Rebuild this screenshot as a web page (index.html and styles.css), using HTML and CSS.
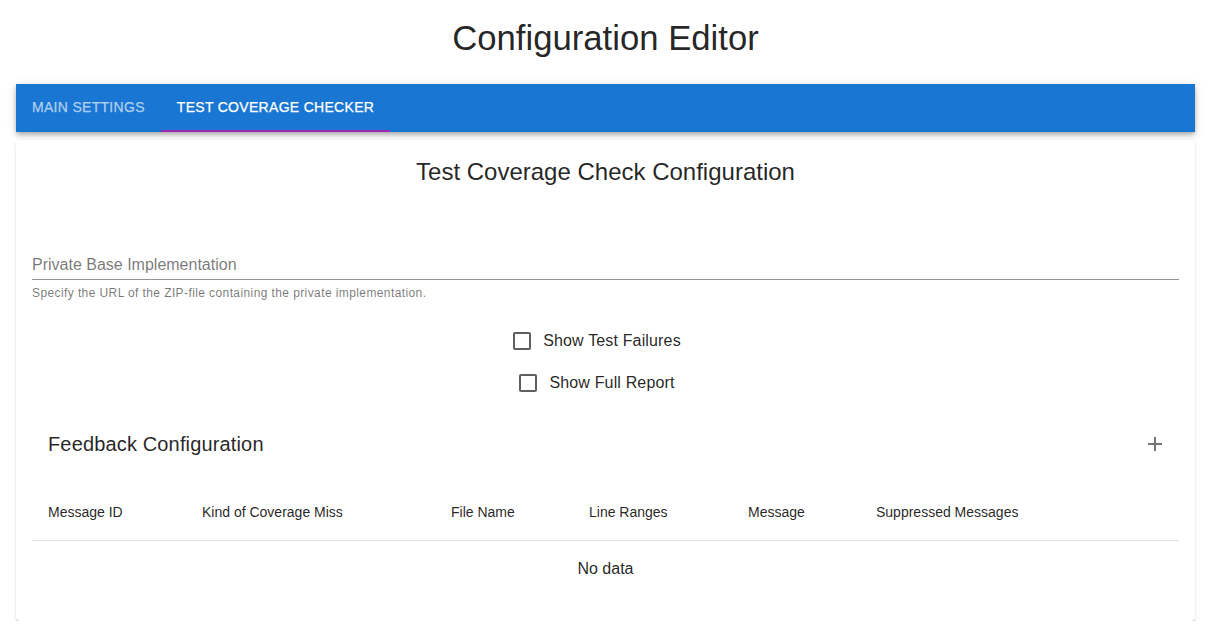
FILE: index.html
```html
<!DOCTYPE html>
<html>
<head>
<meta charset="utf-8">
<link rel="stylesheet" href="styles.css">
</head>
<body>
<h1 class="page-title">Configuration Editor</h1>
<header class="app-bar">
  <div class="tab">Main Settings</div>
  <div class="tab tab-active">Test Coverage Checker</div>
</header>
<main class="card">
  <h2 class="card-title">Test Coverage Check Configuration</h2>
  <div class="field">
    <label class="field-label">Private Base Implementation</label>
    <div class="field-input"></div>
    <p class="field-helper">Specify the URL of the ZIP-file containing the private implementation.</p>
  </div>
  <div class="checks">
    <label class="check"><span class="check-box"><svg viewBox="0 0 24 24" width="24" height="24"><path fill="#5f5f5f" d="M19 5v14H5V5h14m0-2H5c-1.1 0-2 .9-2 2v14c0 1.1.9 2 2 2h14c1.1 0 2-.9 2-2V5c0-1.1-.9-2-2-2z"/></svg></span><span class="check-text">Show Test Failures</span></label>
    <label class="check"><span class="check-box"><svg viewBox="0 0 24 24" width="24" height="24"><path fill="#5f5f5f" d="M19 5v14H5V5h14m0-2H5c-1.1 0-2 .9-2 2v14c0 1.1.9 2 2 2h14c1.1 0 2-.9 2-2V5c0-1.1-.9-2-2-2z"/></svg></span><span class="check-text">Show Full Report</span></label>
  </div>
  <div class="toolbar">
    <h3 class="toolbar-title">Feedback Configuration</h3>
    <button class="icon-btn" aria-label="add"><svg viewBox="0 0 24 24" width="24" height="24"><path fill="#757575" d="M19 13h-6v6h-2v-6H5v-2h6V5h2v6h6v2z"/></svg></button>
  </div>
  <div class="table">
    <div class="thead">
      <div class="th">Message ID</div>
      <div class="th">Kind of Coverage Miss</div>
      <div class="th">File Name</div>
      <div class="th">Line Ranges</div>
      <div class="th">Message</div>
      <div class="th">Suppressed Messages</div>
    </div>
    <div class="empty">No data</div>
  </div>
</main>
</body>
</html>
```

FILE: styles.css
```css
html, body {
  margin: 0;
  padding: 0;
  background: #fff;
}
body {
  font-family: "Liberation Sans", Arial, sans-serif;
  color: rgba(0,0,0,0.87);
  padding: 0 14px 0 16px;
}
.page-title {
  margin: 18px 0 26px;
  font-size: 34.7px;
  line-height: 40px;
  font-weight: 400;
  text-align: center;
}
.app-bar {
  display: flex;
  height: 48px;
  background: #1976d2;
  box-shadow: 0 2px 4px -1px rgba(0,0,0,.2), 0 4px 5px 0 rgba(0,0,0,.14), 0 1px 10px 0 rgba(0,0,0,.12);
}
.tab {
  box-sizing: border-box;
  height: 48px;
  padding: 0 16px 2px;
  display: flex;
  align-items: center;
  font-size: 14px;
  font-weight: 400;
  text-transform: uppercase;
  color: rgba(255,255,255,0.6);
  letter-spacing: 0.3px;
  -webkit-text-stroke: 0.25px currentColor;
}
.tab-active {
  color: #fff;
  box-shadow: inset 0 -2px 0 #9c27b0;
}
.card {
  display: block;
  margin-top: 8px;
  padding: 16px 16px 25px;
  background: #fff;
  border-radius: 4px;
  box-shadow: 0 2px 1px -1px rgba(0,0,0,.2), 0 1px 1px 0 rgba(0,0,0,.14), 0 1px 3px 0 rgba(0,0,0,.12);
}
.card-title {
  margin: 0;
  font-size: 24px;
  line-height: 32px;
  font-weight: 400;
  text-align: center;
}
.field {
  margin-top: 43px;
  display: flex;
  flex-direction: column;
}
.field-label {
  font-size: 16px;
  line-height: 16px;
  color: rgba(0,0,0,0.54);
  margin-top: 26px;
}
.field-input {
  height: 6px;
  border-bottom: 1px solid rgba(0,0,0,0.42);
}
.field-helper {
  margin: 3px 0 0;
  font-size: 12px;
  line-height: 20px;
  letter-spacing: 0.4px;
  color: rgba(0,0,0,0.54);
}
.checks {
  margin-top: 17px;
  display: flex;
  flex-direction: column;
  align-items: center;
}
.check {
  display: flex;
  align-items: center;
  margin-left: -13px;
  margin-right: 16px;
  height: 42px;
}
.check-box {
  display: flex;
  padding: 9px;
}
.check-text {
  font-size: 16px;
  line-height: 24px;
  letter-spacing: 0.15px;
}
.toolbar {
  margin-top: 8px;
  height: 64px;
  display: flex;
  align-items: center;
  justify-content: space-between;
  padding-left: 16px;
}
.toolbar-title {
  margin: 0;
  font-size: 20px;
  font-weight: 400;
  line-height: 32px;
  letter-spacing: 0.15px;
}
.icon-btn {
  border: 0;
  background: none;
  padding: 12px;
  display: flex;
  cursor: pointer;
}
.table {
  margin-top: 8px;
}
.thead {
  display: grid;
  grid-template-columns: 154px 249px 138px 159px 128px 1fr;
  border-bottom: 1px solid rgba(224,224,224,1);
}
.th {
  padding: 16px;
  font-size: 14px;
  line-height: 24px;
  color: rgba(0,0,0,0.87);
  white-space: nowrap;
}
.empty {
  height: 55px;
  display: flex;
  align-items: center;
  justify-content: center;
  font-size: 16px;
}
```
